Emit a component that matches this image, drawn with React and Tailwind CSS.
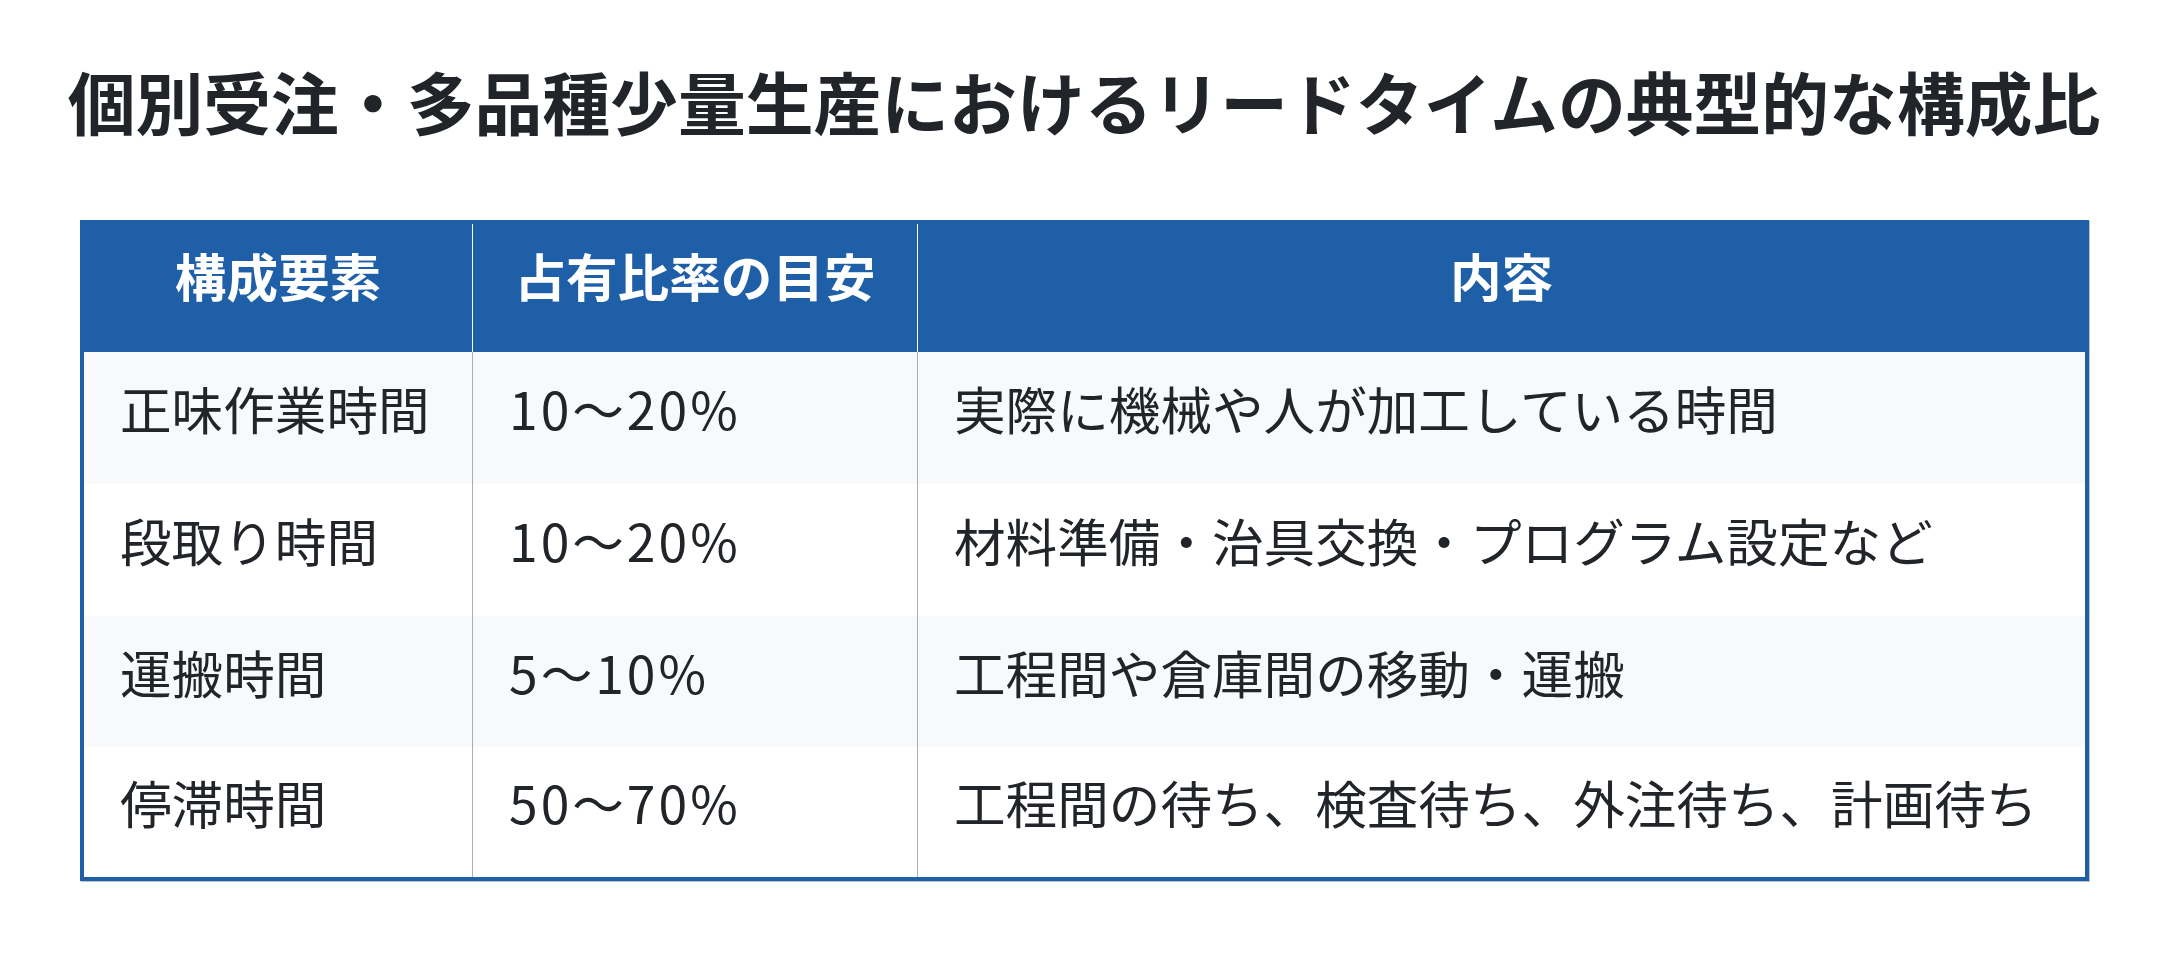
const rows = [
  { name: '正味作業時間', ratio: '10〜20%', desc: '実際に機械や人が加工している時間', h: 'h-[132px]', bg: 'bg-[#f8f9fa]' },
  { name: '段取り時間', ratio: '10〜20%', desc: '材料準備・治具交換・プログラム設定など', h: 'h-[132px]', bg: 'bg-white' },
  { name: '運搬時間', ratio: '5〜10%', desc: '工程間や倉庫間の移動・運搬', h: 'h-[131px]', bg: 'bg-[#f8f9fa]' },
  { name: '停滞時間', ratio: '50〜70%', desc: '工程間の待ち、検査待ち、外注待ち、計画待ち', h: 'h-[130px]', bg: 'bg-white' },
]

export default function App() {
  return (
    <div className="min-h-screen bg-white pt-[60px] font-['Noto_Sans_CJK_JP',sans-serif] text-[#212529]">
      {/* Title */}
      <h1 className="text-center text-[67.8px] font-bold leading-[82px] mb-[78px]">
        個別受注・多品種少量生産におけるリードタイムの典型的な構成比
      </h1>

      {/* Table */}
      <div className="ml-[80px] w-[2009px] border-4 border-[#1f5fa8] shadow-[1px_1px_0_rgba(0,0,0,0.25)]">
        <div className="grid grid-cols-[389px_445px_1fr] h-[128px] bg-[#1f5fa8] text-white font-bold text-[51.6px]">
          <div className="flex items-center justify-center border-r border-white pb-[26px]">構成要素</div>
          <div className="flex items-center justify-center border-r border-white pb-[26px]">占有比率の目安</div>
          <div className="flex items-center justify-center pb-[26px]">内容</div>
        </div>

        {rows.map((row, i) => (
          <div key={i} className={`grid grid-cols-[389px_445px_1fr] text-[51.6px] ${row.h} ${row.bg}`}>
            <div className="flex items-center pl-[36px] pb-[20px] border-r border-[#adadad]">{row.name}</div>
            <div className="flex items-center pl-[36px] pb-[20px] border-r border-[#adadad] tracking-[3px]">{row.ratio}</div>
            <div className="flex items-center pl-[36px] pb-[20px]">{row.desc}</div>
          </div>
        ))}
      </div>
    </div>
  )
}
